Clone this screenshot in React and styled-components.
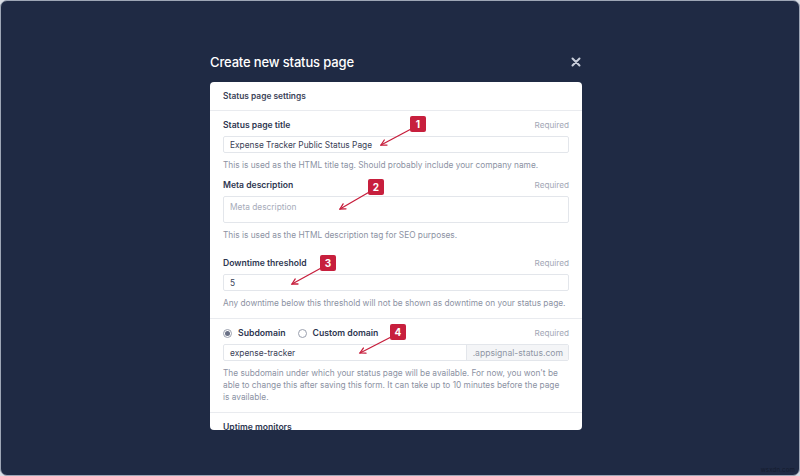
import React from 'react';
import styled, { createGlobalStyle } from 'styled-components';

const GlobalStyle = createGlobalStyle`
  html, body {
    margin: 0;
    padding: 0;
    background: #d9dde4;
  }
  * {
    box-sizing: border-box;
  }
`;

const Frame = styled.div`
  position: relative;
  width: 800px;
  height: 476px;
  overflow: hidden;
  background: #1f2a44;
  border: 1px solid #9ea6b6;
  border-radius: 7px;
  padding: 49px 8px 0 0;
  display: flex;
  flex-direction: column;
  align-items: center;
  font-family: Inter, 'Liberation Sans', sans-serif;
`;

const Modal = styled.div`
  width: 372px;
  display: flex;
  flex-direction: column;
  gap: 8px;
`;

const TitleRow = styled.div`
  height: 24px;
  display: flex;
  align-items: center;
  justify-content: space-between;
`;

const Title = styled.h1`
  margin: 0;
  font-size: 13px;
  font-weight: 500;
  color: #ffffff;
  letter-spacing: -0.15px;
`;

const CloseButton = styled.button`
  width: 14px;
  height: 14px;
  padding: 0;
  border: 0;
  background: none;
  display: flex;
  align-items: center;
  justify-content: center;
  margin-right: -1px;
`;

const Card = styled.div`
  height: 348px;
  overflow: hidden;
  background: #ffffff;
  border-radius: 4px;
`;

const CardHeader = styled.div`
  height: 29px;
  padding: 8px 13px;
  border-bottom: 1px solid #e9ebef;
  font-size: 8.4px;
  line-height: 12px;
  font-weight: 600;
  color: #3a4257;
`;

const Section = styled.div`
  padding: 8px 13px 9px;
  border-bottom: 1px solid #e9ebef;
`;

const Field = styled.div`
  margin-top: ${(p) => p.$gap || 0}px;
`;

const LabelRow = styled.div`
  height: 12px;
  display: flex;
  align-items: center;
  justify-content: space-between;
`;

const Label = styled.span`
  font-size: 8.6px;
  line-height: 12px;
  font-weight: 600;
  color: #2e3650;
`;

const Required = styled.span`
  font-size: 8.2px;
  color: #a3a8b6;
`;

const Input = styled.div`
  margin-top: 5px;
  height: ${(p) => p.$height || 17}px;
  border: 1px solid #e3e6eb;
  border-radius: 2px;
  padding: ${(p) => (p.$multiline ? '4px 6px' : '0 6px')};
  display: flex;
  align-items: ${(p) => (p.$multiline ? 'flex-start' : 'center')};
  font-size: 8.35px;
  line-height: 12px;
  color: ${(p) => (p.$placeholder ? '#a7acba' : '#3a4156')};
`;

const AddonInput = styled.div`
  margin-top: 5px;
  height: 17px;
  display: flex;
  border: 1px solid #e3e6eb;
  border-radius: 2px;
  overflow: hidden;
  font-size: 8.4px;
`;

const AddonValue = styled.div`
  flex: 1;
  padding: 0 6px;
  display: flex;
  align-items: center;
  color: #3a4156;
`;

const Addon = styled.div`
  width: 102px;
  padding: 0 5px;
  display: flex;
  align-items: center;
  justify-content: flex-end;
  background: #f4f5f7;
  border-left: 1px solid #e3e6eb;
  color: #8f95a5;
  font-size: 8.6px;
`;

const Help = styled.p`
  margin: 6px 0 0;
  padding-right: ${(p) => p.$inset || 0}px;
  font-size: 8.3px;
  line-height: 12px;
  color: #8c92a3;
`;

const RadioGroup = styled.div`
  display: flex;
  align-items: center;
  gap: 12px;
`;

const RadioOption = styled.label`
  display: flex;
  align-items: center;
  gap: 6px;
  font-size: 8.7px;
  line-height: 12px;
  font-weight: 600;
  color: #2e3650;
`;

const RadioDot = styled.span`
  width: 9px;
  height: 9px;
  border-radius: 50%;
  border: 1px solid #9aa0ae;
  background: #ffffff;
  display: flex;
  align-items: center;
  justify-content: center;

  &::after {
    content: '';
    width: 5px;
    height: 5px;
    border-radius: 50%;
    background: ${(p) => (p.$checked ? '#6a7186' : 'transparent')};
  }
`;

const Badge = styled.div`
  position: absolute;
  left: ${(p) => p.$x}px;
  top: ${(p) => p.$y}px;
  width: 16px;
  height: 16px;
  border-radius: 2px;
  background: #c71f3d;
  color: #ffffff;
  font-size: 10px;
  font-weight: 700;
  display: flex;
  align-items: center;
  justify-content: center;
`;

const ArrowLayer = styled.svg`
  position: absolute;
  left: -1px;
  top: -1px;
  pointer-events: none;
`;

const Watermark = styled.span`
  position: absolute;
  right: 4px;
  bottom: 2px;
  font-size: 6px;
  color: #151c2e;
  letter-spacing: 0.2px;
`;

const arrows = [
  { n: 1, bx: 410, by: 116, from: [413, 128], to: [381, 145] },
  { n: 2, bx: 368, by: 179, from: [371, 191], to: [340, 209] },
  { n: 3, bx: 320, by: 255, from: [323, 267], to: [292, 284] },
  { n: 4, bx: 390, by: 324, from: [393, 336], to: [360, 353] },
];

function arrowHead([x1, y1], [x2, y2]) {
  const a = Math.atan2(y2 - y1, x2 - x1);
  const len = 6;
  const p1 = [x2 - len * Math.cos(a - 0.5), y2 - len * Math.sin(a - 0.5)];
  const p2 = [x2 - len * Math.cos(a + 0.5), y2 - len * Math.sin(a + 0.5)];
  return `M${p1[0]} ${p1[1]} L${x2} ${y2} L${p2[0]} ${p2[1]}`;
}

const App = () => (
  <>
    <GlobalStyle />
    <Frame>
      <Modal>
        <TitleRow>
          <Title>Create new status page</Title>
          <CloseButton aria-label="Close">
            <svg width="10" height="10" viewBox="0 0 10 10">
              <path d="M1.5 1.5 L8.5 8.5 M8.5 1.5 L1.5 8.5" stroke="#c9cedb" strokeWidth="2" strokeLinecap="round" />
            </svg>
          </CloseButton>
        </TitleRow>
        <Card>
          <CardHeader>Status page settings</CardHeader>
          <Section>
            <Field>
              <LabelRow>
                <Label>Status page title</Label>
                <Required>Required</Required>
              </LabelRow>
              <Input>Expense Tracker Public Status Page</Input>
              <Help>This is used as the HTML title tag. Should probably include your company name.</Help>
            </Field>
            <Field $gap={8}>
              <LabelRow>
                <Label>Meta description</Label>
                <Required>Required</Required>
              </LabelRow>
              <Input $height={27} $multiline $placeholder>Meta description</Input>
              <Help>This is used as the HTML description tag for SEO purposes.</Help>
            </Field>
            <Field $gap={16}>
              <LabelRow>
                <Label>Downtime threshold</Label>
                <Required>Required</Required>
              </LabelRow>
              <Input>5</Input>
              <Help>Any downtime below this threshold will not be shown as downtime on your status page.</Help>
            </Field>
          </Section>
          <Section>
            <Field>
              <LabelRow>
                <RadioGroup>
                  <RadioOption>
                    <RadioDot $checked />
                    Subdomain
                  </RadioOption>
                  <RadioOption>
                    <RadioDot />
                    Custom domain
                  </RadioOption>
                </RadioGroup>
                <Required>Required</Required>
              </LabelRow>
              <AddonInput>
                <AddonValue>expense-tracker</AddonValue>
                <Addon>.appsignal-status.com</Addon>
              </AddonInput>
              <Help $inset={6}>
                The subdomain under which your status page will be available. For now, you won't be able to change
                this after saving this form. It can take up to 10 minutes before the page is available.
              </Help>
            </Field>
          </Section>
          <Section>
            <LabelRow>
              <Label>Uptime monitors</Label>
            </LabelRow>
          </Section>
        </Card>
      </Modal>

      <ArrowLayer width="800" height="476">
        {arrows.map((a) => (
          <g key={a.n} stroke="#c71f3d" strokeWidth="1.3" fill="none" strokeLinecap="round">
            <path d={`M${a.from[0]} ${a.from[1]} L${a.to[0]} ${a.to[1]}`} />
            <path d={arrowHead(a.from, a.to)} />
          </g>
        ))}
      </ArrowLayer>
      {arrows.map((a) => (
        <Badge key={a.n} $x={a.bx - 1} $y={a.by - 1}>
          {a.n}
        </Badge>
      ))}
      <Watermark>wsxdn.com</Watermark>
    </Frame>
  </>
);

export default App;
